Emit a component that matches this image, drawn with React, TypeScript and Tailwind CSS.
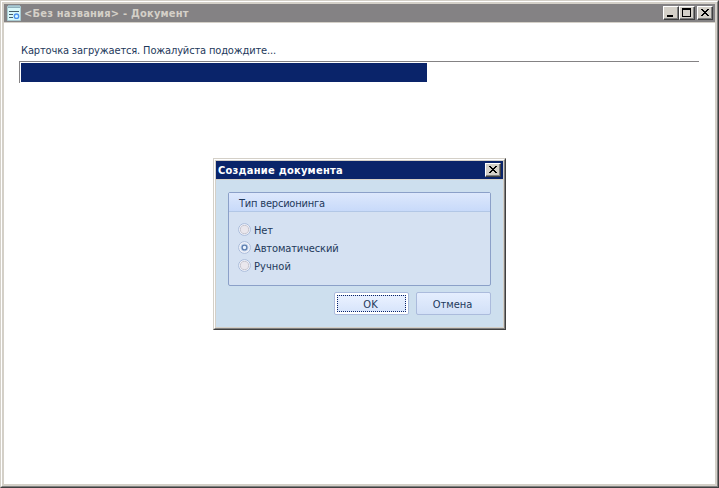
import type { ReactNode } from 'react';

const raised =
  'shrink-0 border border-t-white border-l-white border-r-[#404040] border-b-[#404040] bg-[#d4d0c8] shadow-[inset_-1px_-1px_0_#808080]';

function CaptionButton({ label, children }: { label: string; children: ReactNode }) {
  return (
    <button aria-label={label} className={`block h-[14px] w-4 ${raised}`}>
      <svg width="14" height="12" viewBox="0 0 14 12" shapeRendering="crispEdges" className="block">
        {children}
      </svg>
    </button>
  );
}

function CloseGlyph() {
  return (
    <path
      fill="#000"
      d="M3 2h2v1h-2zM9 2h2v1h-2zM4 3h2v1h-2zM8 3h2v1h-2zM5 4h4v1h-4zM6 5h2v1h-2zM5 6h4v1h-4zM4 7h2v1h-2zM8 7h2v1h-2zM3 8h2v1h-2zM9 8h2v1h-2z"
    />
  );
}

function DocumentIcon() {
  return (
    <svg width="14" height="16" viewBox="0 0 14 16" className="shrink-0">
      <path d="M1 0h12v2H1z" fill="#9db9c6" />
      <path d="M.5 1.5h13v14H.5z" fill="#d8f7fa" stroke="#a9cbd2" />
      <path d="M1 2.5h12" stroke="#8fb0bd" />
      <path d="M2 6.5h10M2 9.5h4M2 12.5h4" stroke="#455d6b" />
      <circle cx="9.5" cy="11.2" r="2.2" fill="#d8f7ff" stroke="#4a91ee" strokeWidth="1.3" />
    </svg>
  );
}

function Radio({ label, selected, spacing }: { label: string; selected?: boolean; spacing: string }) {
  return (
    <label className="flex h-[18px] items-start gap-[3px]">
      <svg width="13" height="13" viewBox="0 0 13 13" className="mt-[2px] shrink-0">
        <circle cx="6.5" cy="6.5" r="5.9" fill="#f4f5fb" stroke="#a9bbda" />
        {selected ? (
          <>
            <circle cx="6.5" cy="6.5" r="3.8" fill="#d9e7f8" stroke="#b9cae2" strokeWidth=".6" />
            <circle cx="6.5" cy="6.5" r="2.4" fill="#edf5ff" stroke="#5f7fb0" strokeWidth="1.4" />
          </>
        ) : (
          <circle cx="6.5" cy="6.5" r="4.1" fill="#eae7ed" stroke="#c1bfc9" strokeWidth=".9" />
        )}
      </svg>
      <span className={`pt-[2.5px] ${spacing}`}>{label}</span>
    </label>
  );
}

function Dialog() {
  return (
    <section className="absolute top-[157px] left-[212px] h-[172px] w-[293px] border border-t-[#d4d0c8] border-l-[#d4d0c8] border-r-[#404040] border-b-[#404040]">
      <div className="h-full border border-t-white border-l-white border-r-[#808080] border-b-[#808080]">
        <div className="h-full border border-[#d4d0c8] bg-[#cddfee]">
          <header className="flex h-[19px] items-center justify-between border-b border-[#d4d0c8] bg-[#0a246a] px-[2px]">
            <h2 className="pt-px text-[11px] font-bold tracking-[0.25px] text-white">Создание документа</h2>
            <CaptionButton label="Закрыть">
              <CloseGlyph />
            </CaptionButton>
          </header>
          <div className="px-3 pt-3">
            <div className="h-[94px] w-[263px] rounded-[2px] border border-[#8ba0c8] bg-[#d5e1f2]">
              <div className="flex h-[19px] items-center border-b border-[#b2c7e6] bg-linear-to-b from-[#dde8fc] to-[#c8dafa] pt-[3px] pl-[10px]">
                <span className="tracking-[-0.2px]">Тип версионинга</span>
              </div>
              <div className="pt-[9px] pl-[9px]">
                <Radio label="Нет" spacing="tracking-[-0.1px]" />
                <Radio label="Автоматический" selected spacing="tracking-[-0.13px]" />
                <Radio label="Ручной" spacing="tracking-[0.05px]" />
              </div>
            </div>
            <div className="mt-[6px] flex w-[263px] justify-end gap-[7px]">
              <button className="h-[23px] w-[75px] rounded-[2px] border border-[#abbbdc] bg-white p-[2px]">
                <span className="flex h-full items-center justify-center border border-dotted border-[#0a246a] bg-linear-to-b from-[#eaf1ff] to-[#d8e5fb] pt-[2px] pr-[2px]">
                  OK
                </span>
              </button>
              <button className="h-[23px] w-[75px] rounded-[2px] border border-[#abbbdc] bg-linear-to-b from-[#e5eefe] to-[#d2e0f7] pt-[2px] pr-[2px]">
                Отмена
              </button>
            </div>
          </div>
        </div>
      </div>
    </section>
  );
}

export default function App() {
  return (
    <div className="relative h-[488px] w-[719px] overflow-hidden border border-t-[#d4d0c8] border-l-[#d4d0c8] border-r-[#404040] border-b-[#404040] font-['DejaVu_Sans_Condensed','DejaVu_Sans',sans-serif] text-[11px] leading-[14px] whitespace-nowrap text-[#1e395b]">
      <div className="h-full border border-t-white border-l-white border-r-[#808080] border-b-[#808080]">
        <div className="h-full border-2 border-[#d4d0c8] bg-white">
          <header className="flex h-[19px] items-center border-b border-[#d4d0c8] bg-[#848284] pr-[2px] pl-[3px]">
            <DocumentIcon />
            <h1 className="ml-[3px] flex-1 pt-px text-[11px] font-bold tracking-[0.21px] text-[#d4d0c8]">
              &lt;Без названия&gt; - Документ
            </h1>
            <CaptionButton label="Свернуть">
              <path fill="#000" d="M3 8h6v2H3z" />
            </CaptionButton>
            <CaptionButton label="Развернуть">
              <path fill="#000" d="M2 1h9v9H2zM3 3v6h7V3z" fillRule="evenodd" />
            </CaptionButton>
            <div className="w-[2px]" />
            <CaptionButton label="Закрыть">
              <CloseGlyph />
            </CaptionButton>
          </header>
          <main className="px-[15px] pt-5">
            <p className="h-[18px] pt-px pl-[2px] tracking-[-0.15px]">Карточка загружается. Пожалуйста подождите...</p>
            <div className="h-[22px] w-[680px] border-t border-l border-[#848284] pt-px pl-px">
              <div className="h-[19px] w-[406px] bg-[#0a246a]" />
            </div>
          </main>
        </div>
      </div>
      <Dialog />
    </div>
  );
}
